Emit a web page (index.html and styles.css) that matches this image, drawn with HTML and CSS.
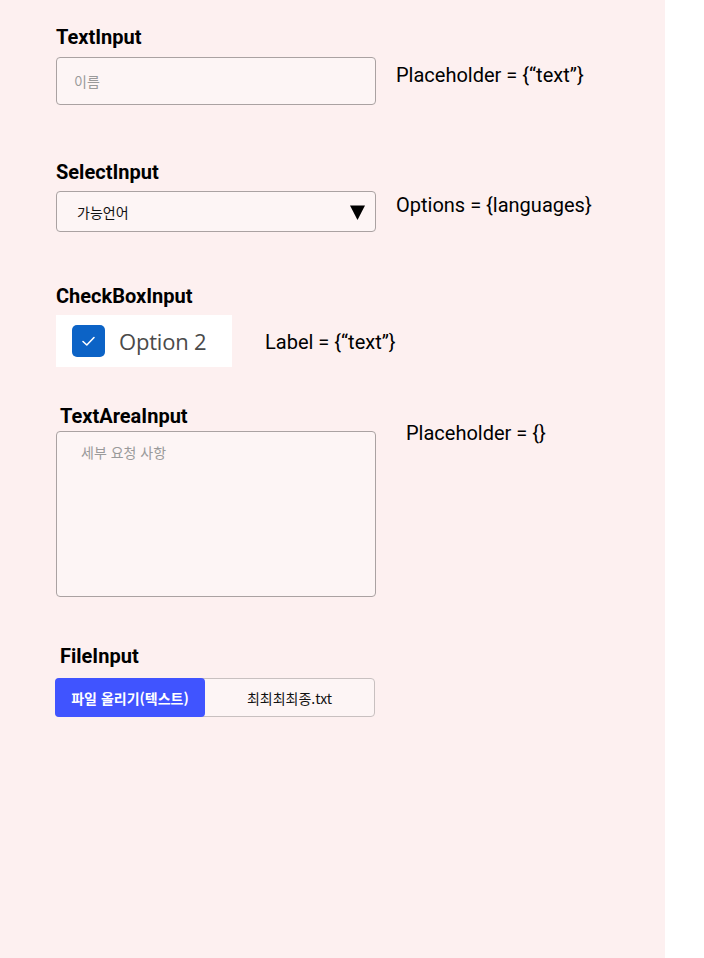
FILE: index.html
```html
<!DOCTYPE html>
<html lang="ko">
<head>
<meta charset="utf-8">
<link rel="stylesheet" href="styles.css">
</head>
<body>
<div class="panel">
  <section class="sec sec-text">
    <h2 class="title">TextInput</h2>
    <div class="row row-text">
      <div class="field field-text"><span class="ph">이름</span></div>
      <span class="prop">Placeholder = {“text”}</span>
    </div>
  </section>

  <section class="sec sec-select">
    <h2 class="title">SelectInput</h2>
    <div class="row row-select">
      <div class="field field-select">
        <span class="val">가능언어</span>
        <svg class="caret" width="15" height="15" viewBox="0 0 15 15"><polygon points="0,0.5 15,0.5 7.5,15" fill="#000"/></svg>
      </div>
      <span class="prop">Options = {languages}</span>
    </div>
  </section>

  <section class="sec sec-check">
    <h2 class="title">CheckBoxInput</h2>
    <div class="row row-check">
      <div class="checkcard">
        <span class="box">
          <svg width="15" height="12" viewBox="0 0 15 12"><polyline points="2,6.5 5.8,10 13,2.5" fill="none" stroke="#fff" stroke-width="1.6" stroke-linecap="round" stroke-linejoin="round"/></svg>
        </span>
        <span class="opt">Option 2</span>
      </div>
      <span class="prop">Label = {“text”}</span>
    </div>
  </section>

  <section class="sec sec-area">
    <h2 class="title indent">TextAreaInput</h2>
    <div class="row row-area">
      <div class="field field-area"><span class="ph">세부 요청 사항</span></div>
      <span class="prop">Placeholder = {}</span>
    </div>
  </section>

  <section class="sec sec-file">
    <h2 class="title indent">FileInput</h2>
    <div class="filebox">
      <span class="filebtn">파일 올리기(텍스트)</span>
      <span class="filename">최최최최종.txt</span>
    </div>
  </section>
</div>
</body>
</html>
```

FILE: styles.css
```css
* { box-sizing: border-box; }
html, body { margin: 0; padding: 0; background: #fff; }
body { font-family: Roboto, "Noto Sans CJK KR", sans-serif; }

.panel {
  width: 665px;
  height: 958px;
  background: #fdf0f0;
  padding: 26px 0 0 56px;
}

.title {
  margin: 0;
  font-family: Roboto, sans-serif;
  font-weight: 700;
  font-size: 20px;
  line-height: 22px;
  color: #000;
}
.title.indent { margin-left: 4px; }

.sec-select { margin-top: 56px; }
.sec-check { margin-top: 53px; }
.sec-area { margin-top: 38px; }
.sec-file { margin-top: 48px; }

.row { display: flex; align-items: flex-start; }

.prop {
  font-family: Roboto, sans-serif;
  font-size: 20px;
  line-height: 22px;
  color: #000;
  white-space: nowrap;
}

.field {
  width: 320px;
  background: #fdf5f5;
  border: 1px solid #aaa2a2;
  border-radius: 4px;
}

.ph {
  font-family: "Noto Sans CJK KR", sans-serif;
  font-size: 14px;
  color: #9a9a9a;
}

.row-text { margin-top: 9px; gap: 20px; }
.field-text {
  height: 48px;
  display: flex;
  align-items: center;
  padding-left: 17px;
}
.row-text .prop { margin-top: 7px; }

.row-select { margin-top: 8px; gap: 20px; }
.field-select {
  height: 41px;
  display: flex;
  align-items: center;
  justify-content: space-between;
  padding: 0 10px 0 20px;
}
.val {
  font-family: "Noto Sans CJK KR", sans-serif;
  font-size: 14px;
  color: #111;
}
.caret { display: block; margin-top: 1px; }
.row-select .prop { margin-top: 3px; }

.row-check { margin-top: 8px; gap: 33px; align-items: center; }
.checkcard {
  width: 176px;
  height: 52px;
  background: #fff;
  display: flex;
  align-items: center;
  padding-left: 16px;
}
.box {
  width: 33px;
  height: 32px;
  border-radius: 5px;
  background: #0c63c6;
  display: flex;
  align-items: center;
  justify-content: center;
}
.box svg { display: block; }
.opt {
  margin-left: 14px;
  font-family: "Open Sans", sans-serif;
  font-size: 22px;
  color: #4a4a4a;
  line-height: 1;
  letter-spacing: -0.2px;
}
.row-check .prop { margin-top: 2px; }

.row-area { margin-top: 4px; gap: 30px; }
.field-area {
  height: 166px;
  padding: 10px 0 0 24px;
}
.field-area .ph { line-height: 20px; }
.row-area .prop { margin-top: -9px; }

.filebox {
  margin-top: 11px;
  margin-left: -1px;
  width: 320px;
  height: 39px;
  display: flex;
  border: 1px solid #c8c0c0;
  border-radius: 4px;
  background: #fdf5f5;
}
.filebtn {
  width: 150px;
  margin: -1px 0 -1px -1px;
  background: #4054ff;
  border-radius: 4px;
  color: #fff;
  font-family: "Noto Sans CJK KR", sans-serif;
  font-weight: 700;
  font-size: 14px;
  display: flex;
  align-items: center;
  justify-content: center;
}
.filename {
  flex: 1;
  display: flex;
  align-items: center;
  justify-content: center;
  font-family: "Noto Sans CJK KR", sans-serif;
  font-size: 14px;
  color: #111;
}
```
